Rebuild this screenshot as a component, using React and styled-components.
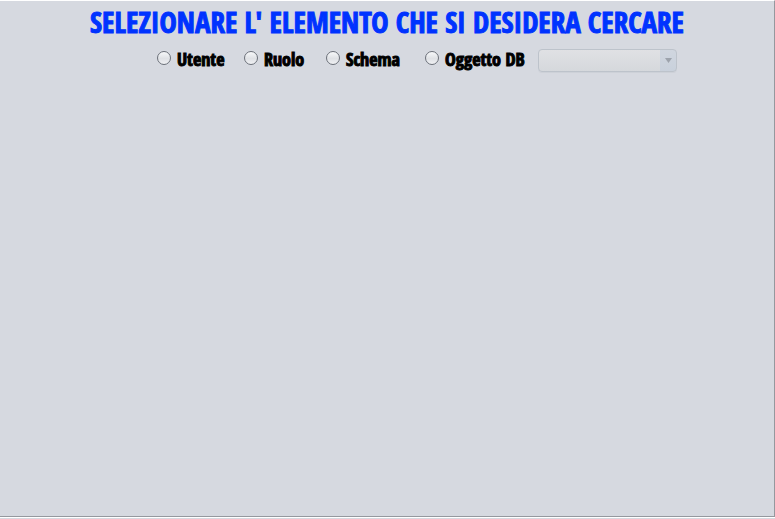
import { useState } from 'react';
import styled, { createGlobalStyle } from 'styled-components';

const GlobalStyle = createGlobalStyle`
  * { box-sizing: border-box; }
  body { margin: 0; background: #d6d9e0; }
`;

const Page = styled.div`
  min-height: 100vh;
  display: flex;
  flex-direction: column;
  padding-bottom: 1px;
`;

const Panel = styled.main`
  flex: 1;
  border-top: 1px solid #ffffff;
  border-right: 1px solid #95989e;
  border-bottom: 1px solid #95989e;
  box-shadow: 0 1px 0 #ffffff;
  margin-bottom: 1px;
  font-family: Impact, "Open Sans Condensed", "Roboto Condensed", "Liberation Sans", sans-serif;
`;

const Title = styled.h1`
  margin: 0;
  padding-top: 1px;
  text-align: center;
  font-size: 29px;
  line-height: 40px;
  font-weight: 800;
  color: #0033ff;
  -webkit-text-stroke: 1px #0033ff;
`;

const Filters = styled.form`
  display: grid;
  grid-template-columns: 87px 82px 99px 113px 139px;
  justify-content: center;
  align-items: center;
  padding-top: 7px;
  padding-left: 60px;
`;

const Option = styled.label`
  display: flex;
  align-items: center;
  gap: 6px;
  height: 23px;
  padding-bottom: 5px;
  white-space: nowrap;
  font-size: 18px;
  line-height: 20px;
  font-weight: 800;
  color: #000000;
  -webkit-text-stroke: 1px #000000;

  span { padding-top: 1px; }
`;

const Radio = styled.input`
  appearance: none;
  flex: none;
  width: 14px;
  height: 14px;
  margin: 0;
  border: 1px solid #6b7079;
  border-radius: 50%;
  background: linear-gradient(#f7f8fa, #dfe1e5 55%, #f0f1f4);

  &:checked {
    background: radial-gradient(circle, #22364c 3px, #dfe6ee 4px);
  }
`;

const SelectBox = styled.div`
  display: grid;
  height: 23px;

  > * { grid-area: 1 / 1; }
`;

const Select = styled.select`
  appearance: none;
  width: 100%;
  height: 23px;
  padding: 0 22px 0 6px;
  border: 1px solid #bdc3cb;
  border-radius: 4px;
  box-shadow: 0 1px 0 #cdd1d8;
  background:
    linear-gradient(#d0d6df, #c9d1dc) right / 16px 100% no-repeat,
    linear-gradient(#e0e1e4, #d5d8dc);
  opacity: 1;
`;

const Arrow = styled.svg`
  justify-self: end;
  align-self: center;
  margin-right: 5px;
  pointer-events: none;
  fill: #9da3ac;
`;

const options = ['Utente', 'Ruolo', 'Schema', 'Oggetto DB'];

export default function App() {
  const [kind, setKind] = useState('');
  return (
    <Page>
      <GlobalStyle />
      <Panel>
        <Title>SELEZIONARE L' ELEMENTO CHE SI DESIDERA CERCARE</Title>
        <Filters>
          {options.map((name) => (
            <Option key={name}>
              <Radio
                type="radio"
                name="kind"
                value={name}
                checked={kind === name}
                onChange={() => setKind(name)}
              />
              <span>{name}</span>
            </Option>
          ))}
          <SelectBox>
            <Select aria-label="Oggetto DB" disabled={kind !== 'Oggetto DB'} />
            <Arrow width="7" height="5" viewBox="0 0 7 5" aria-hidden="true">
              <path d="M0 0h7L3.5 5z" />
            </Arrow>
          </SelectBox>
        </Filters>
      </Panel>
    </Page>
  );
}
